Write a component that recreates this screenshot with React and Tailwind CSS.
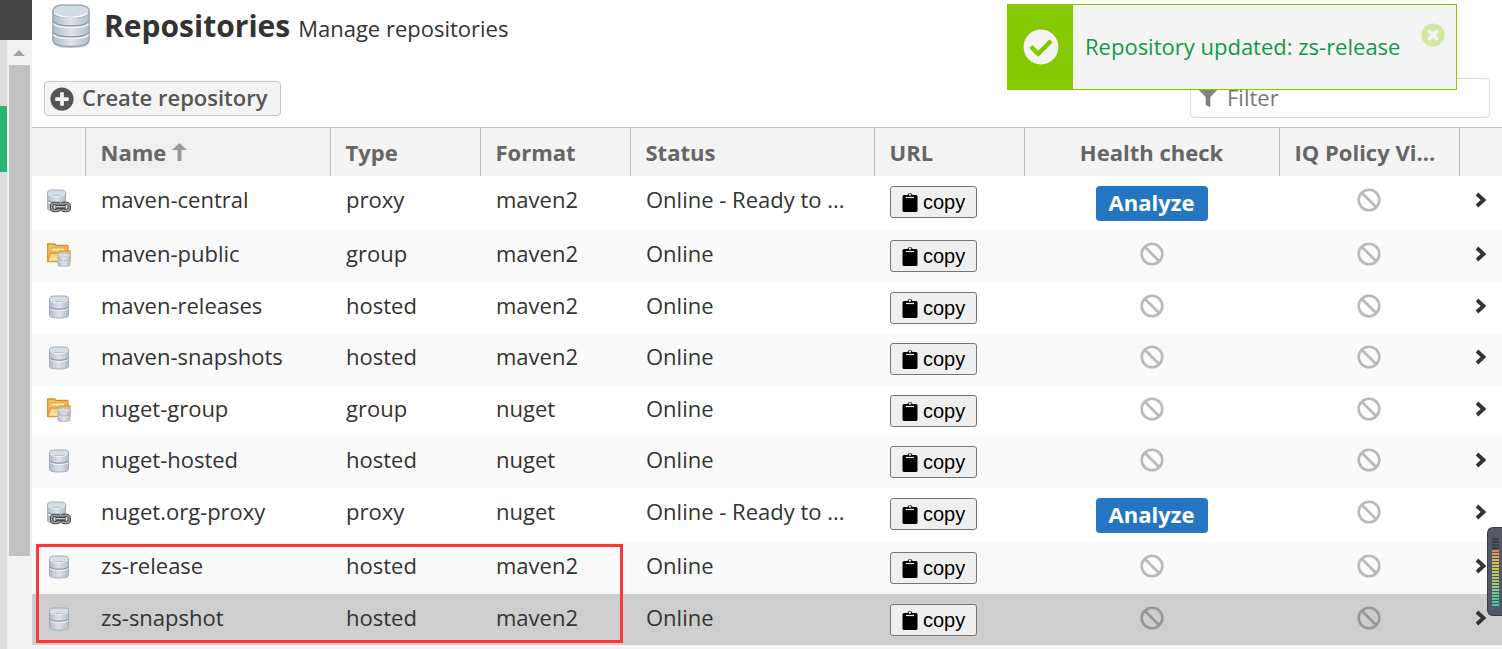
import { FaCheckCircle, FaFilter, FaPlusCircle, FaTimesCircle } from 'react-icons/fa'

const REPOSITORIES = [
  { name: 'maven-central', type: 'proxy', format: 'maven2', status: 'Online - Ready to ...', analyze: true },
  { name: 'maven-public', type: 'group', format: 'maven2', status: 'Online' },
  { name: 'maven-releases', type: 'hosted', format: 'maven2', status: 'Online' },
  { name: 'maven-snapshots', type: 'hosted', format: 'maven2', status: 'Online' },
  { name: 'nuget-group', type: 'group', format: 'nuget', status: 'Online' },
  { name: 'nuget-hosted', type: 'hosted', format: 'nuget', status: 'Online' },
  { name: 'nuget.org-proxy', type: 'proxy', format: 'nuget', status: 'Online - Ready to ...', analyze: true },
  { name: 'zs-release', type: 'hosted', format: 'maven2', status: 'Online' },
  { name: 'zs-snapshot', type: 'hosted', format: 'maven2', status: 'Online', selected: true },
]

const METER_COLORS = [
  '#3a3f4e', '#3a3f4e', '#3a3f4e', '#3a3f4e', '#e08a5c', '#e0955a', '#e0a254', '#deae50', '#dcb94e', '#d8c04e',
  '#d2c650', '#c8c854', '#bcca58', '#b0cb5e', '#a4cc66', '#98cd70', '#8ccd7c', '#7ecc88', '#6ecb92', '#60c99c',
  '#54c8a4', '#4cc7ac', '#48c6b2',
]

function DatabaseShape() {
  return (
    <g>
      <path d="M1.5 4v16.5c0 1.6 4 2.5 9.500 2.500s9.500-.9 9.500-2.500V4z" fill="url(#steel)" stroke="#a3adb8" />
      <path d="M2 12.300c2 1.500 5 1.900 9 1.900s7-.4 9-1.900" fill="none" stroke="#8f9ba9" strokeWidth="1.200" />
      <path d="M2 13.600c2 1.500 5 1.900 9 1.900s7-.4 9-1.900" fill="none" stroke="#f3f6fa" />
      <rect x="1.500" y="1" width="19" height="6" rx="5" ry="2.800" fill="#d5dfe8" stroke="#9daab5" />
      <path d="M2.500 5.500c2 1.800 5 2.200 8.500 2.200s6.500-.4 8.500-2.200" fill="none" stroke="#f6f9fc" />
    </g>
  )
}

function Gradients() {
  return (
    <svg width="0" height="0" className="absolute" aria-hidden="true">
      <defs>
        <linearGradient id="steel">
          <stop offset="0" stopColor="#b0bbc8" />
          <stop offset=".5" stopColor="#dde3ec" />
          <stop offset="1" stopColor="#b3bdca" />
        </linearGradient>
        <linearGradient id="folder" x2="0" y2="1">
          <stop offset="0" stopColor="#f5c560" />
          <stop offset="1" stopColor="#fdebaa" />
        </linearGradient>
      </defs>
    </svg>
  )
}

function RepositoryIcon({ type }) {
  if (type === 'proxy') {
    return (
      <svg viewBox="0 0 24 24" className="size-6" aria-hidden="true">
        <g transform="translate(-1 0) scale(.96)"><DatabaseShape /></g>
        <g fill="none">
          <rect x="4.700" y="14.500" width="7.500" height="7" rx="2.500" stroke="#4c4c4c" strokeWidth="3.600" />
          <rect x="15" y="14.500" width="7.200" height="7" rx="2.500" stroke="#4c4c4c" strokeWidth="3.600" />
          <rect x="4.700" y="14.500" width="7.500" height="7" rx="2.500" stroke="#a0a0a0" strokeWidth="1.400" />
          <rect x="15" y="14.500" width="7.200" height="7" rx="2.500" stroke="#a0a0a0" strokeWidth="1.400" />
          <path d="M8.500 18h10" stroke="#444" strokeWidth="4" />
          <path d="M9 17.700h9" stroke="#c4c4c4" strokeWidth="1.400" />
        </g>
      </svg>
    )
  }
  if (type === 'group') {
    return (
      <svg viewBox="0 0 24 24" className="size-6" aria-hidden="true">
        <path d="M.7 1h7l1.500 1.500H20a1 1 0 0 1 1 1V18H.7z" fill="#f3c15e" stroke="#cf8f38" strokeWidth="1.300" />
        <path d="M4 7V5h14v3" fill="#fff3c5" stroke="#dca047" />
        <path d="M.7 18.500 3.500 10h7l2.500-2h10v10.500z" fill="url(#folder)" stroke="#dc9a3e" strokeWidth="1.300" />
        <g transform="translate(10 9.500) scale(.63 .61)"><DatabaseShape /></g>
      </svg>
    )
  }
  return (
    <svg viewBox="-1 0 24 24" className="size-6" aria-hidden="true">
      <DatabaseShape />
    </svg>
  )
}

function PageIcon() {
  return (
    <svg viewBox="0 0 40 46" className="h-[46px] w-10 shrink-0" aria-hidden="true">
      <path d="M3 9v29c0 5 6 6 17 6s17-1 17-6V9z" fill="#000" opacity=".18" />
      <path d="M2 7v29c0 5 6 6.500 18 6.500S38 41 38 36V7z" fill="url(#steel)" stroke="#98a5b0" strokeWidth="1.500" />
      <g fill="none">
        <path d="M2.500 18c2 3 9 4 17.500 4s15.500-1 17.500-4M2.500 29c2 3 9 4 17.500 4s15.500-1 17.500-4" stroke="#8b98a8" strokeWidth="1.500" />
        <path d="M2.500 19.500c2 3 9 4 17.500 4s15.500-1 17.500-4M2.500 30.500c2 3 9 4 17.500 4s15.500-1 17.500-4" stroke="#f1f5f9" strokeWidth="1.500" />
      </g>
      <rect x="2" y="1" width="36" height="12" rx="9" ry="5.500" fill="#cfdde4" stroke="#9dadb5" strokeWidth="1.500" />
      <path d="M3.500 9c3 3.500 9 4 16.500 4s13.500-.5 16.500-4" fill="none" stroke="#f5fafc" strokeWidth="1.500" />
    </svg>
  )
}

function BanIcon({ dark }) {
  return (
    <svg viewBox="0 0 24 24" className={`mx-auto h-7 w-6 ${dark ? 'text-[#969696]' : 'text-[#b9b9b9]'}`} role="img" aria-label="Not available">
      <circle cx="12" cy="12" r="10.300" fill="none" stroke="currentColor" strokeWidth="2.600" />
      <path d="m5 5 14 14" stroke="currentColor" strokeWidth="2.600" />
    </svg>
  )
}

function ClipboardIcon() {
  return (
    <svg viewBox="0 0 16 20" className="h-5 w-4" aria-hidden="true">
      <path d="M2 3h3.500a2.600 2.600 0 0 1 5 0H14a1.500 1.500 0 0 1 1.500 1.500v14A1.500 1.500 0 0 1 14 20H2a1.500 1.500 0 0 1-1.500-1.500v-14A1.500 1.500 0 0 1 2 3z" />
      <circle cx="8" cy="2.600" r="1.200" fill="#efefef" />
      <path d="M4 5.500h8" stroke="#efefef" strokeWidth="1.200" />
    </svg>
  )
}

function ChevronIcon() {
  return (
    <svg viewBox="0 0 12 16" className="h-7 w-3" aria-hidden="true">
      <path d="m2 2 6.500 6L2 14" fill="none" stroke="#333" strokeWidth="3.800" />
    </svg>
  )
}

function HeaderCell({ children, className = 'text-left' }) {
  return (
    <th scope="col" className={`truncate border-l border-[#c0c0c0] px-[15px] font-bold ${className}`}>
      {children}
    </th>
  )
}

function RepositoryRow({ repo, striped }) {
  const background = repo.selected ? 'bg-[#cecece]' : striped ? 'bg-[#fafafa]' : 'bg-white'
  const height = repo.analyze ? 'h-[54px]' : striped ? 'h-[52px]' : 'h-[51px]'

  return (
    <tr className={`align-top leading-7 ${background} ${height}`}>
      <td className="pt-[13px] pl-[15px]"><RepositoryIcon type={repo.type} /></td>
      <td className="truncate px-4 pt-[9px]">{repo.name}</td>
      <td className="truncate px-4 pt-[9px]">{repo.type}</td>
      <td className="truncate px-4 pt-[9px]">{repo.format}</td>
      <td className="truncate px-4 pt-[9px]">{repo.status}</td>
      <td className="px-4 pt-[10px]">
        <button className="flex h-8 items-center gap-[5px] rounded-[3px] border border-[#767676] bg-[#efefef] px-[11px] font-['Liberation_Sans',sans-serif] text-xl leading-6 text-black">
          <ClipboardIcon />
          copy
        </button>
      </td>
      <td className="pt-[10px] text-center">
        {repo.analyze ? (
          <button className="h-[35px] w-28 rounded bg-[#2476c3] pb-[2px] align-top font-bold text-white">Analyze</button>
        ) : (
          <BanIcon dark={repo.selected} />
        )}
      </td>
      <td className="pt-[10px]"><BanIcon dark={repo.selected} /></td>
      <td className="pt-[10px] pl-4"><ChevronIcon /></td>
    </tr>
  )
}

function Toast() {
  return (
    <div role="status" className="absolute top-1 right-[45px] flex h-[86px] w-[450px] border border-[#85c900] bg-[#f4f4f4]">
      <div className="flex w-[65px] shrink-0 items-center justify-center bg-[#85c900]">
        <FaCheckCircle className="size-9 text-[#f4f4f4]" />
      </div>
      <p className="self-center pb-[2px] pl-3 whitespace-nowrap text-[#0f9a48]">Repository updated: zs-release</p>
      <button className="absolute top-[18px] right-[11px]" aria-label="Dismiss">
        <FaTimesCircle className="size-6 text-[#d0e8a0]" />
      </button>
    </div>
  )
}

function Sidebar() {
  return (
    <aside className="flex w-8 shrink-0 flex-col">
      <div className="h-10 bg-[#444]" />
      <div className="flex flex-1">
        <div className="w-[7px] bg-[#dedede] pt-[66px]">
          <div className="h-[66px] bg-[#2ab574]" />
        </div>
        <div className="flex flex-1 flex-col items-center bg-[#f1f1f1] pr-px">
          <svg viewBox="0 0 12 6" className="mt-[10px] mb-[9px] h-[6px] w-3" aria-hidden="true">
            <path d="M0 6 6 0l6 6z" fill="#a3a3a3" />
          </svg>
          <div className="h-[491px] w-[21px] bg-[#c1c1c1]" />
        </div>
      </div>
    </aside>
  )
}

function VolumeMeter() {
  return (
    <div className="absolute right-0 bottom-[33px] flex h-[89px] w-[15px] flex-col items-center gap-px rounded-l-md border border-r-0 border-[#363b46] bg-[#535869] pt-[10px]">
      {METER_COLORS.map((color, i) => (
        <span key={i} className="h-[2px] w-[7px]" style={{ backgroundColor: color }} />
      ))}
    </div>
  )
}

export default function App() {
  return (
    <div className="relative flex min-h-screen overflow-hidden bg-[#f4f4f4] font-['Open_Sans',sans-serif] text-[22px] leading-7 text-[#333]">
      <Gradients />
      <Sidebar />
      <main className="min-w-0 flex-1">
        <div className="bg-white">
          <header className="flex h-[78px] items-start gap-[13px] pt-1 pl-[19px]">
            <PageIcon />
            <div className="flex items-baseline gap-2 leading-[44px]">
              <h1 className="text-[30px] font-bold">Repositories</h1>
              <p>Manage repositories</p>
            </div>
          </header>

          <div className="flex h-[49px] items-start justify-between px-3">
            <button className="mt-[3px] flex h-[35px] items-center gap-2 rounded border border-[#c5c5c5] bg-[#f4f4f4] pr-3 pl-[5px] font-semibold text-[#555]">
              <FaPlusCircle className="size-6" />
              <span className="pb-1">Create repository</span>
            </button>
            <label className="flex h-10 w-[300px] items-center gap-[10px] rounded border border-[#ddd] bg-white px-2">
              <FaFilter className="size-[18px] text-[#808080]" />
              <input type="text" aria-label="Filter" placeholder="Filter" className="min-w-0 flex-1 pb-[2px] outline-none placeholder:text-[#777]" />
            </label>
          </div>
        </div>

        <div className="relative">
          <table className="w-full table-fixed border-collapse">
            <colgroup>
              <col className="w-[53px]" />
              <col className="w-[245px]" />
              <col className="w-[150px]" />
              <col className="w-[150px]" />
              <col />
              <col className="w-[150px]" />
              <col className="w-[255px]" />
              <col className="w-[180px]" />
              <col className="w-[43px]" />
            </colgroup>
            <thead>
              <tr className="h-12 border-t border-[#c0c0c0] bg-[#f4f4f4] text-[#666]">
                <th scope="col" aria-label="Icon" />
                <HeaderCell className="bg-[#f0f0f0] text-left">
                  <span className="inline-flex items-center gap-[6px]">
                    Name
                    <svg viewBox="0 0 15 18" className="h-[18px] w-[15px]" aria-hidden="true">
                      <path d="M7.500 0 15 7H9.500v11h-4V7H0z" fill="#999" />
                    </svg>
                  </span>
                </HeaderCell>
                <HeaderCell>Type</HeaderCell>
                <HeaderCell>Format</HeaderCell>
                <HeaderCell>Status</HeaderCell>
                <HeaderCell>URL</HeaderCell>
                <HeaderCell className="text-center">Health check</HeaderCell>
                <HeaderCell>IQ Policy Vi...</HeaderCell>
                <th scope="col" aria-label="Open" className="border-l border-[#c0c0c0]" />
              </tr>
            </thead>
            <tbody>
              {REPOSITORIES.map((repo, i) => (
                <RepositoryRow key={repo.name} repo={repo} striped={i % 2 === 1} />
              ))}
            </tbody>
          </table>
          {/* Highlight around the two new repositories */}
          <div className="pointer-events-none absolute bottom-[2px] left-1 h-[99px] w-[587px] border-3 border-[#fc3636]" />
        </div>
      </main>
      <Toast />
      <VolumeMeter />
    </div>
  )
}
